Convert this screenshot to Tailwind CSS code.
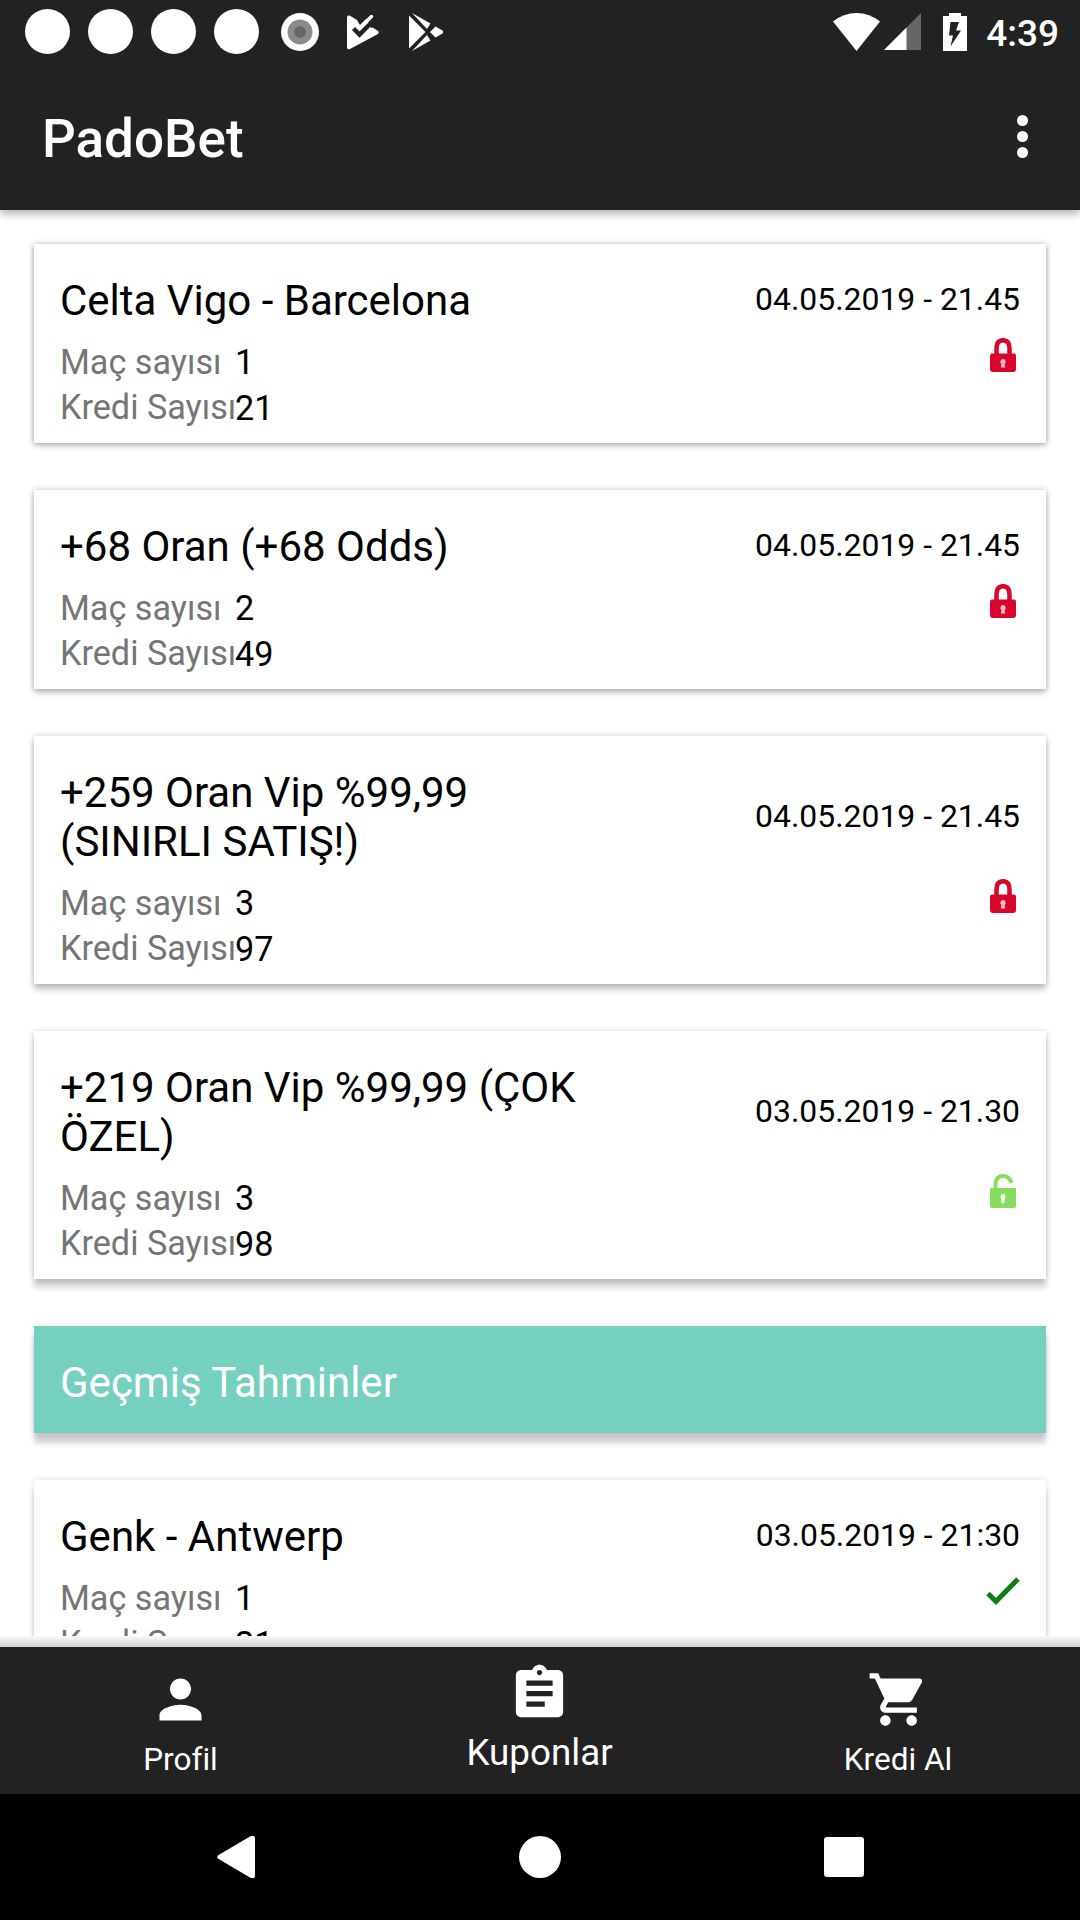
<!DOCTYPE html>
<html lang="tr">
<head>
    <meta charset="UTF-8">
    <meta name="viewport" content="width=device-width, initial-scale=1.0">
    <title>PadoBet</title>
    <script src="https://cdn.jsdelivr.net/npm/@tailwindcss/browser@4"></script>
</head>
<body class="bg-white font-[Roboto,sans-serif] text-black">
    <!-- shared icons -->
    <svg class="hidden">
        <symbol id="lock" viewBox="0 0 26 34">
            <path fill="none" stroke="#d8062c" stroke-width="4.500" d="M6.500 17V10.500C6.500 5 9 2.200 13 2.200s6.500 2.800 6.500 8.300V17"/>
            <path fill="#d8062c" d="M2 15.500h22q2 0 2 2V31q0 3-3 3H3q-3 0-3-3V17.500q0-2 2-2z"/>
            <path fill="#f9bcc6" d="M13 21a2.800 2.800 0 0 1 1.600 5l.6 3.500h-4.400l.6-3.500A2.800 2.800 0 0 1 13 21z"/>
        </symbol>
        <symbol id="unlock" viewBox="0 0 26 34">
            <path fill="none" stroke="#86dc5c" stroke-width="4" d="M5.500 16V10.500C5.500 5 8.500 2 13 2c4 0 7 2.500 8.500 7"/>
            <path fill="#86dc5c" d="M1 14h24q1 0 1 1v17q0 2-2 2H2q-2 0-2-2V15q0-1 1-1z"/>
            <path fill="#eefbe6" d="M13 20a2.500 2.500 0 0 1 2 4v3.500q0 2-2 2t-2-2V24a2.500 2.500 0 0 1 2-4z"/>
        </symbol>
    </svg>

    <div class="flex flex-col w-[1080px] h-[1920px] overflow-hidden">
        <header class="relative z-10 h-[210px] shrink-0 bg-[#222222] text-white shadow-[0_4px_8px_rgba(0,0,0,0.3)]">
            <div class="flex items-center justify-between h-[63px] pl-[25px] pr-[21px]">
                <div class="flex items-center gap-[18px]">
                    <span class="size-[45px] rounded-full bg-white"></span>
                    <span class="size-[45px] rounded-full bg-white"></span>
                    <span class="size-[45px] rounded-full bg-white"></span>
                    <span class="size-[45px] rounded-full bg-white"></span>
                    <svg class="ml-1 size-[38px]" viewBox="0 0 38 38">
                        <circle cx="19" cy="19" r="19" fill="#fff"/>
                        <circle cx="19" cy="19" r="12.500" fill="#8a8a8a"/>
                        <circle cx="19" cy="19" r="5.800" fill="#666"/>
                    </svg>
                    <svg class="ml-[10px] w-[32px] h-[36px]" viewBox="0 0 32 36">
                        <path fill="#fff" d="M0 3.500Q0 .5 3 1.800L10 6l3 5 6.500-6.500L24 14l1.500-.5 5 3q2.500 1.800 0 3.800L3 35q-3 1-3-1.500z"/>
                        <path fill="none" stroke="#222" stroke-width="4.500" d="M6.500 14.500l6 6L29 4"/>
                        <path fill="none" stroke="#fff" stroke-width="3.500" stroke-linecap="round" d="M9 10.500l3.500 4L24.500 2.500"/>
                    </svg>
                    <svg class="ml-[12px] w-[35px] h-[38px]" viewBox="0 0 35 38">
                        <path fill="#fff" d="M0 2.500l16.500 16.500L0 35.500zM3 0l18.500 10.500-3.500 5.500zM3 38l18.500-10.500-3.500-5.500zM26.500 13.500l7 4q1.500 1.500 0 3l-7 4-5.500-5.500z"/>
                    </svg>
                </div>
                <div class="flex items-center">
                    <svg class="w-[47px] h-[38px]" viewBox="0 0 47 38">
                        <path fill="#fff" d="M0 8.500Q10.500 0 23.500 0T47 8.500L23.500 38z"/>
                    </svg>
                    <svg class="ml-1 size-[37px]" viewBox="0 0 37 37">
                        <path fill="#666" d="M37 0v37H0z"/>
                        <path fill="#fff" d="M22.500 14.500V37H0z"/>
                    </svg>
                    <svg class="ml-[22px] w-[24px] h-[38px]" viewBox="0 0 24 38">
                        <path fill="#fff" d="M6 0h12v3h6v35H0V3h6z"/>
                        <path fill="#222" d="M7.500 9h8.500l-3 8.500h5L7.500 33.500l2.500-11H6z"/>
                    </svg>
                    <span class="ml-[19px] pt-[3px] text-[37px] leading-[43px] font-medium">4:39</span>
                </div>
            </div>
            <div class="flex items-center justify-between h-[147px] pl-[42px] pr-[52px]">
                <h1 class="pt-[7px] text-[53px] font-medium">PadoBet</h1>
                <svg class="w-[11px] h-[43px]" viewBox="0 0 11 43" fill="#fff">
                    <circle cx="5.500" cy="5.500" r="5.500"/>
                    <circle cx="5.500" cy="21.500" r="5.500"/>
                    <circle cx="5.500" cy="37.500" r="5.500"/>
                </svg>
            </div>
        </header>

        <main class="flex flex-col gap-[47px] h-[1426px] shrink-0 overflow-hidden px-[34px] pt-[34px]">
            <article class="h-[199px] shrink-0 bg-white pt-[32px] px-[26px] shadow-[0_0_6px_rgba(0,0,0,0.26),0_3px_6px_rgba(0,0,0,0.2)]">
                <div class="flex items-center justify-between">
                    <h2 class="text-[42px] leading-[49px]">Celta Vigo - Barcelona</h2>
                    <time class="pb-0.5 text-[31.9px] leading-[37px]">04.05.2019 - 21.45</time>
                </div>
                <div class="flex justify-between pt-[13px]">
                    <dl class="grid grid-cols-[175px_auto] pt-[2px] text-[34.2px] leading-[45px] whitespace-nowrap">
                        <dt class="text-[#757575]">Maç sayısı</dt><dd>1</dd>
                        <dt class="text-[#757575]">Kredi Sayısı</dt><dd class="pt-px">21</dd>
                    </dl>
                    <svg class="mr-1 w-[26px] h-[34px]"><use href="#lock"/></svg>
                </div>
            </article>

            <article class="h-[199px] shrink-0 bg-white pt-[32px] px-[26px] shadow-[0_0_6px_rgba(0,0,0,0.24),0_4px_6px_rgba(0,0,0,0.2)]">
                <div class="flex items-center justify-between">
                    <h2 class="text-[42px] leading-[49px]">+68 Oran (+68 Odds)</h2>
                    <time class="pb-0.5 text-[31.9px] leading-[37px]">04.05.2019 - 21.45</time>
                </div>
                <div class="flex justify-between pt-[13px]">
                    <dl class="grid grid-cols-[175px_auto] pt-[2px] text-[34.2px] leading-[45px] whitespace-nowrap">
                        <dt class="text-[#757575]">Maç sayısı</dt><dd>2</dd>
                        <dt class="text-[#757575]">Kredi Sayısı</dt><dd class="pt-px">49</dd>
                    </dl>
                    <svg class="mr-1 w-[26px] h-[34px]"><use href="#lock"/></svg>
                </div>
            </article>

            <article class="h-[248px] shrink-0 bg-white pt-[32px] px-[26px] shadow-[0_0_6px_rgba(0,0,0,0.2),0_6px_6px_rgba(0,0,0,0.2)]">
                <div class="flex items-center justify-between">
                    <h2 class="w-[540px] text-[42px] leading-[49px]">+259 Oran Vip %99,99 (SINIRLI SATIŞ!)</h2>
                    <time class="pb-0.5 text-[31.9px] leading-[37px]">04.05.2019 - 21.45</time>
                </div>
                <div class="flex justify-between pt-[13px]">
                    <dl class="grid grid-cols-[175px_auto] pt-[2px] text-[34.2px] leading-[45px] whitespace-nowrap">
                        <dt class="text-[#757575]">Maç sayısı</dt><dd>3</dd>
                        <dt class="text-[#757575]">Kredi Sayısı</dt><dd class="pt-px">97</dd>
                    </dl>
                    <svg class="mr-1 w-[26px] h-[34px]"><use href="#lock"/></svg>
                </div>
            </article>

            <article class="h-[248px] shrink-0 bg-white pt-[32px] px-[26px] shadow-[0_0_6px_rgba(0,0,0,0.16),0_8px_6px_rgba(0,0,0,0.2)]">
                <div class="flex items-center justify-between">
                    <h2 class="w-[540px] text-[42px] leading-[49px]">+219 Oran Vip %99,99 (ÇOK ÖZEL)</h2>
                    <time class="pb-0.5 text-[31.9px] leading-[37px]">03.05.2019 - 21.30</time>
                </div>
                <div class="flex justify-between pt-[13px]">
                    <dl class="grid grid-cols-[175px_auto] pt-[2px] text-[34.2px] leading-[45px] whitespace-nowrap">
                        <dt class="text-[#757575]">Maç sayısı</dt><dd>3</dd>
                        <dt class="text-[#757575]">Kredi Sayısı</dt><dd class="pt-px">98</dd>
                    </dl>
                    <svg class="mr-1 w-[26px] h-[34px]"><use href="#unlock"/></svg>
                </div>
            </article>

            <!-- past predictions heading -->
            <div class="h-[107px] shrink-0 bg-[#75d0bf] pt-[32px] px-[26px] text-white shadow-[0_0_6px_rgba(0,0,0,0.12),0_10px_5px_rgba(0,0,0,0.19)]">
                <h2 class="text-[42px] leading-[49px]">Geçmiş Tahminler</h2>
            </div>

            <article class="h-[199px] shrink-0 bg-white pt-[32px] px-[26px] shadow-[0_0_6px_rgba(0,0,0,0.12),0_10px_5px_rgba(0,0,0,0.19)]">
                <div class="flex items-center justify-between">
                    <h2 class="text-[42px] leading-[49px]">Genk - Antwerp</h2>
                    <time class="pb-0.5 text-[31.9px] leading-[37px]">03.05.2019 - 21:30</time>
                </div>
                <div class="flex justify-between pt-[13px]">
                    <dl class="grid grid-cols-[175px_auto] pt-[2px] text-[34.2px] leading-[45px] whitespace-nowrap">
                        <dt class="text-[#757575]">Maç sayısı</dt><dd>1</dd>
                        <dt class="text-[#757575]">Kredi Sayısı</dt><dd class="pt-px">21</dd>
                    </dl>
                    <svg class="mt-[3px] w-[34px] h-[28px]" viewBox="0 0 34 28">
                        <path fill="none" stroke="#0f7d17" stroke-width="5" d="M2 16.500l8 8L32 2"/>
                    </svg>
                </div>
            </article>
        </main>
        <div class="h-[11px] shrink-0 bg-linear-to-b from-[#fafafa] to-[#d2d2d2]"></div>

        <nav class="flex h-[147px] shrink-0 bg-[#222222] text-white text-[31.5px] leading-[37px]">
            <a class="flex w-[361px] flex-col items-center pt-[21px]">
                <svg class="size-[63px]" viewBox="0 0 24 24" fill="currentColor"><path d="M12 12c2.210 0 4-1.790 4-4s-1.790-4-4-4-4 1.790-4 4 1.790 4 4 4zm0 2c-2.670 0-8 1.340-8 4v2h16v-2c0-2.660-5.330-4-8-4z"/></svg>
                <span class="mt-[10px]">Profil</span>
            </a>
            <a class="flex w-[357px] flex-col items-center pt-[15px]">
                <svg class="size-[63px]" viewBox="0 0 24 24" fill="currentColor"><path d="M19 3h-4.180C14.400 1.840 13.300 1 12 1c-1.300 0-2.400.84-2.820 2H5c-1.100 0-2 .9-2 2v14c0 1.100.9 2 2 2h14c1.100 0 2-.9 2-2V5c0-1.100-.9-2-2-2zm-7 0c.55 0 1 .45 1 1s-.45 1-1 1-1-.45-1-1 .45-1 1-1zm2 14H7v-2h7v2zm3-4H7v-2h10v2zm0-4H7V7h10v2z"/></svg>
                <span class="mt-[6px] text-[36.75px] leading-[43px]">Kuponlar</span>
            </a>
            <a class="flex w-[360px] flex-col items-center pt-[21px]">
                <svg class="size-[63px]" viewBox="0 0 24 24" fill="currentColor"><path d="M7 18c-1.100 0-1.990.9-1.990 2S5.900 22 7 22s2-.9 2-2-.9-2-2-2zM1 2v2h2l3.600 7.590-1.350 2.450c-.16.28-.25.61-.25.96 0 1.100.9 2 2 2h12v-2H7.420c-.14 0-.25-.11-.25-.25l.03-.12.9-1.630h7.450c.75 0 1.410-.41 1.750-1.030l3.580-6.490c.08-.14.12-.31.12-.48 0-.55-.45-1-1-1H5.210l-.94-2H1zm16 16c-1.100 0-1.990.9-1.990 2s.89 2 1.990 2 2-.9 2-2-.9-2-2-2z"/></svg>
                <span class="mt-[10px]">Kredi Al</span>
            </a>
        </nav>

        <!-- system buttons -->
        <footer class="flex h-[126px] shrink-0 items-center justify-between bg-black pl-[217px] pr-[216px]">
            <svg class="w-[38px] h-[44px]" viewBox="0 0 38 44">
                <path fill="#fff" d="M1.200 20.300L33 1.500Q38 -1 38 4v36q0 5-5 2.500L1.200 23.700q-2-1.700 0-3.400z"/>
            </svg>
            <span class="size-[42px] rounded-full bg-white"></span>
            <span class="size-10 rounded-[3px] bg-white"></span>
        </footer>
    </div>
</body>
</html>
